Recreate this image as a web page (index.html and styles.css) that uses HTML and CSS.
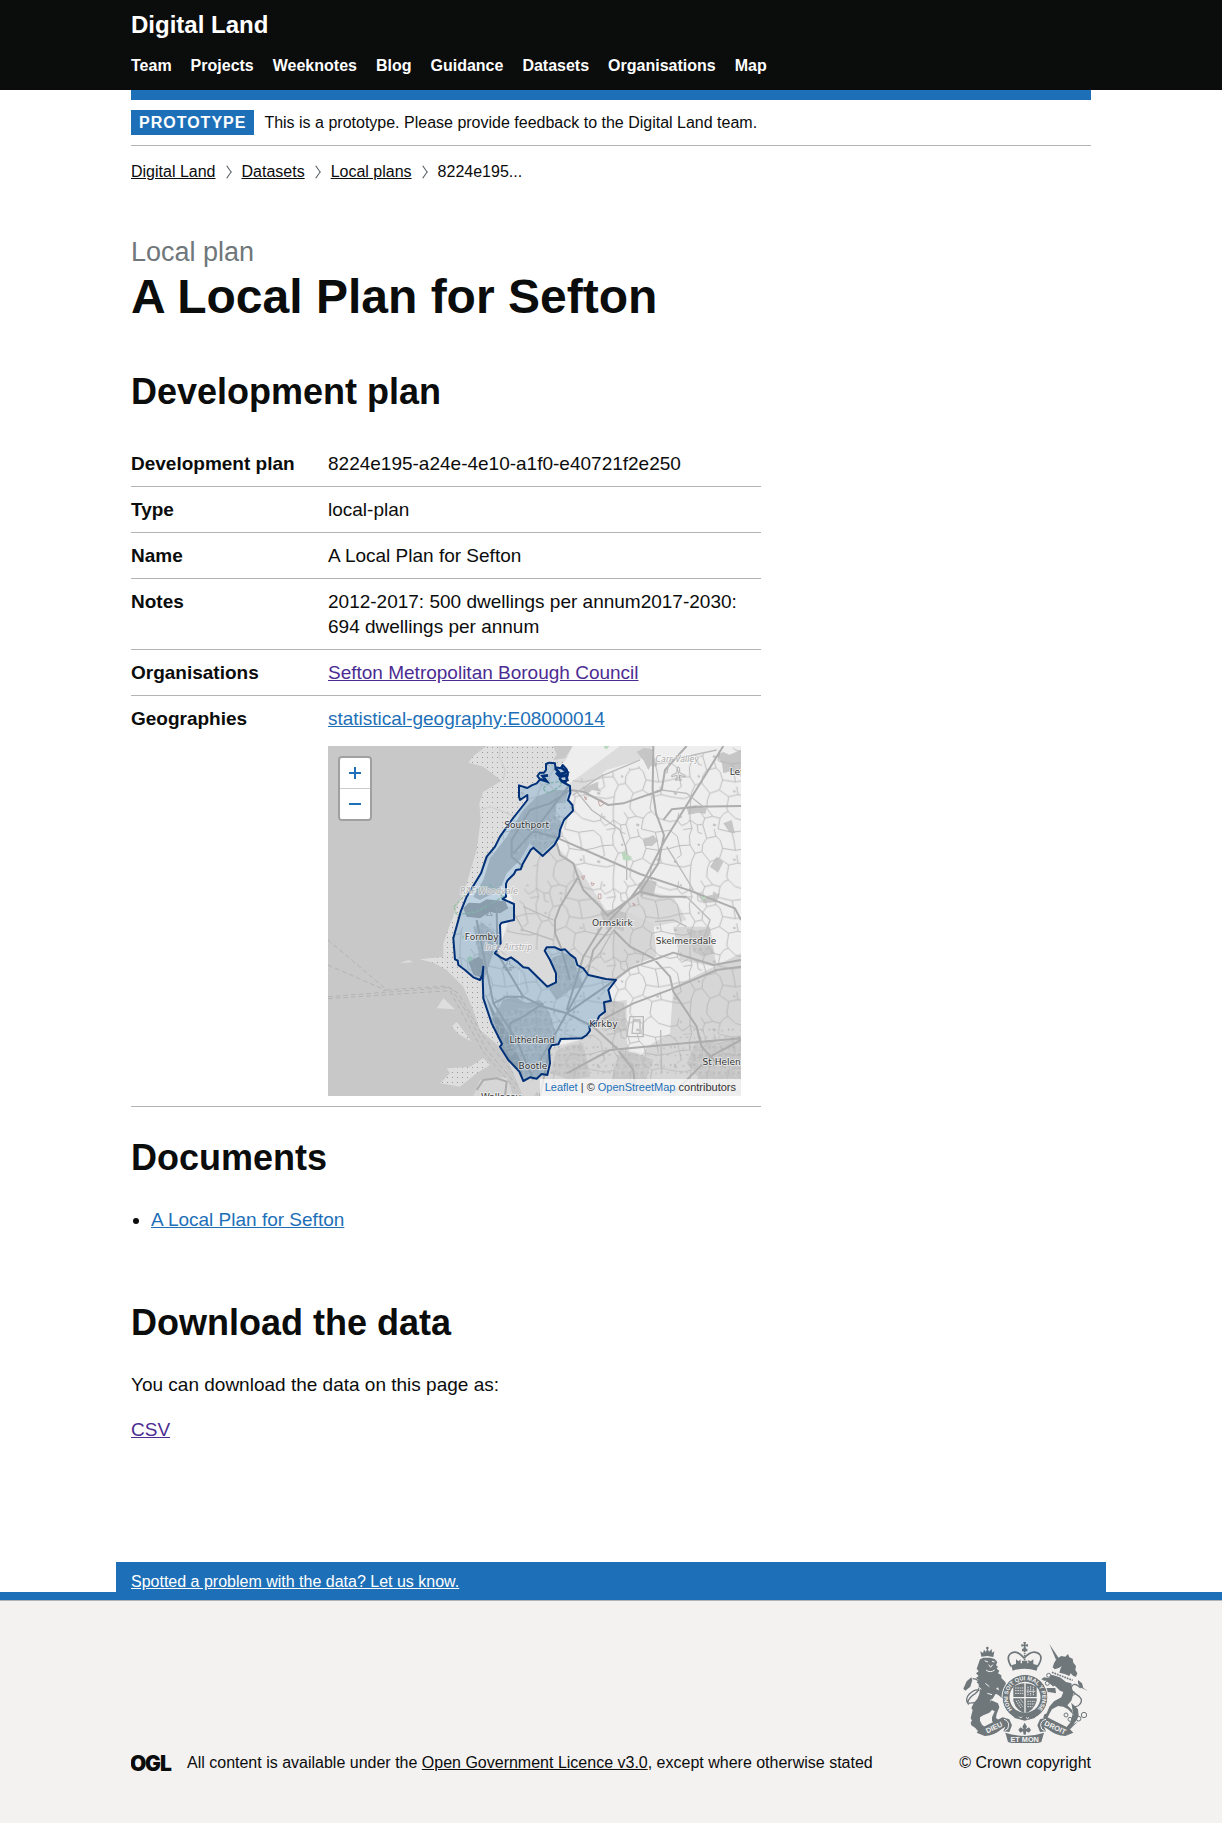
FILE: index.html
```html
<!DOCTYPE html>
<html lang="en">
<head>
<meta charset="utf-8">
<meta name="viewport" content="width=device-width, initial-scale=1">
<title>A Local Plan for Sefton | Digital Land</title>
<link rel="stylesheet" href="styles.css">
</head>
<body>
<header class="header">
  <div class="container">
    <a class="header-title" href="#">Digital Land</a>
    <nav class="header-nav" aria-label="Main">
      <a href="#">Team</a>
      <a href="#">Projects</a>
      <a href="#">Weeknotes</a>
      <a href="#">Blog</a>
      <a href="#">Guidance</a>
      <a href="#">Datasets</a>
      <a href="#">Organisations</a>
      <a href="#">Map</a>
    </nav>
  </div>
</header>

<div class="container">
  <div class="phase-banner">
    <strong class="tag">prototype</strong>
    <span>This is a prototype. Please provide feedback to the Digital Land team.</span>
  </div>
  <nav aria-label="Breadcrumb">
    <ol class="breadcrumbs">
      <li><a href="#">Digital Land</a></li>
      <li><a href="#">Datasets</a></li>
      <li><a href="#">Local plans</a></li>
      <li>8224e195...</li>
    </ol>
  </nav>

  <main class="main">
    <span class="caption">Local plan</span>
    <h1 class="title">A Local Plan for Sefton</h1>

    <section class="section">
      <h2 class="heading">Development plan</h2>
      <dl class="summary">
        <div class="summary-row"><dt>Development plan</dt><dd>8224e195-a24e-4e10-a1f0-e40721f2e250</dd></div>
        <div class="summary-row"><dt>Type</dt><dd>local-plan</dd></div>
        <div class="summary-row"><dt>Name</dt><dd>A Local Plan for Sefton</dd></div>
        <div class="summary-row"><dt>Notes</dt><dd>2012-2017: 500 dwellings per annum2017-2030: 694 dwellings per annum</dd></div>
        <div class="summary-row"><dt>Organisations</dt><dd><a class="link visited" href="#">Sefton Metropolitan Borough Council</a></dd></div>
        <div class="summary-row"><dt>Geographies</dt><dd>
          <a class="link" href="#">statistical-geography:E08000014</a>
          <div class="map">
            <svg class="map-canvas" viewBox="-336 18 1239 1050" preserveAspectRatio="xMidYMid slice" role="img" aria-label="Map of Sefton">
              <defs>
                <pattern id="flats" width="15" height="15" patternUnits="userSpaceOnUse"><rect x="6" y="6" width="3" height="3" fill="#999"/></pattern>
                <pattern id="lanes" width="230" height="205" patternUnits="userSpaceOnUse">
                  <path d="M0 40L22 36 35 52 52 44 60 35 82 50 98 48 104 30 128 24 150 30 163 14 175 10 196 30 230 40M60 35L66 60 58 82 60 110 75 135 64 160 60 205M98 48L110 90 138 84 150 95 158 120 196 126 230 120M0 120L28 112 60 110M110 90L98 108 96 130 120 160 112 180 110 205M158 120L148 150 176 170 170 205M150 30L144 62 186 72 230 66M60 0V35M110 0L128 24M170 0L175 10M75 135L96 130M0 66L22 84 28 112M186 72L192 98 196 126M120 160L148 150M66 60L40 64M138 84L132 62M28 112L34 140 20 150M0 170L40 176 62 170M176 170L204 164 230 170M204 164L200 140M104 30L92 12M82 50L84 72 96 76M22 36L26 14" fill="none" stroke="#b4b4b4" stroke-width="2.6" stroke-linejoin="round"/>
                  <path d="M130 45l9 3-3 6-8-2zM30 22l7 3-3 5-6-3zM85 105l6 4-4 5-5-5zM12 155l10 3-3 7-8-3zM190 150l7 2-1 6-7-2z" fill="#bebebe"/>
                </pattern>
                <pattern id="streets" width="58" height="53" patternUnits="userSpaceOnUse">
                  <path d="M0 10L24 16 58 6M24 16L16 53M40 12L50 32 32 53M0 34L19 38 50 32 58 34M16 0L24 16M24 27l20-6M6 12l-3 20M34 36l4 8" fill="none" stroke="#d8d8d8" stroke-width="2"/>
                  <path d="M6 18h5v5H6zM31 22h6v4h-6zM42 42h6v4h-6zM8 44h4v4H8zM52 18h4v6h-4zM24 42h4v5h-4z" fill="#adadad"/>
                </pattern>
                <path id="sefton" d="M237 136L262 144 275 136 290 130 300 118 292 108 300 98 312 98 318 90 318 72 328 68 345 70 346 82 362 85 368 75 380 88 384 102 378 125 368 126 390 138 391 158 384 180 397 195 399 212 372 240 360 270 358 288 343 315 308 348 280 323 272 330 248 372 242 388 228 390 222 402 202 422 198 432 198 470 188 477 222 492 222 540 185 548 180 555 182 610 165 640 182 652 198 660 213 652 235 668 250 682 265 684 322 740 348 727 348 700 330 660 314 632 320 622 345 622 362 630 375 628 390 643 406 655 412 675 430 685 445 705 475 712 498 717 528 720 505 750 513 782 492 787 495 815 478 828 468 848 448 860 450 872 440 885 425 895 362 897 355 913 335 916 327 930 330 970 322 1005 305 1002 290 1016 270 1012 250 1023 238 995 205 960 180 920 186 912 155 850 130 775 128 712 130 680 127 705 120 720 100 712 75 690 55 675 53 662 45 658 40 595 62 515 80 470 123 400 140 350 165 320 180 290 215 240 262 180 262 165 240 180 237 170Z"/>
                <clipPath id="inside"><use href="#sefton"/></clipPath>
              </defs>
              <rect x="-336" y="18" width="1239" height="1050" fill="#c8c8c8"/>
              <g id="flat-shapes">
                <path d="M140 18L100 48 85 68 130 80 185 122 130 155 118 190 122 240 110 330 80 430 35 540 10 610 10 650-60 658-20 668 20 690 70 740 100 810 120 870 180 920 400 700 400 18ZM-120 670L-95 660-80 666ZM-10 805L10 775 45 808ZM35 860L50 845 95 905 60 885ZM0 1030L30 1000 20 985 90 980 130 955 150 975 110 1000 60 1040Z" fill="#dedede"/>
                <path d="M140 18L100 48 85 68 130 80 185 122 130 155 118 190 122 240 110 330 80 430 35 540 10 610 10 650-60 658-20 668 20 690 70 740 100 810 120 870 180 920 400 700 400 18ZM35 860L50 845 95 905 60 885ZM0 1030L30 1000 20 985 90 980 130 955 150 975 110 1000 60 1040Z" fill="url(#flats)"/>
                <path d="M180 18L178 50 195 90 190 120M120 210L150 200 190 215 225 230" fill="none" stroke="#d0d0d0" stroke-width="4"/>
              </g>
              <path d="M340 18L398 18 375 55 340 60 350 45Z" fill="#c8c8c8"/>
              <path d="M398 18H903V1068H250L205 960 130 775 128 700 53 662 40 595 80 470 240 200 300 110 340 95 378 60Z" fill="#eee"/>
              <path d="M540 18L390 130 400 165 500 90 600 60 640 18Z" fill="#dcdcdc"/>
              <path d="M340 310L420 390 505 520 600 450 700 470 740 540 640 560 610 660 520 730 420 700 320 740 170 650 222 490 198 430 280 323Z" fill="#dadada"/>
              <path d="M505 540L560 515 640 550 650 650 560 680 520 660ZM700 560L810 560 830 680 720 660ZM700 740L903 640V1068H540L620 920 690 880ZM470 790L560 780 560 900 600 1068H250L205 960 330 925 420 900Z" fill="#d6d6d6"/>
              <path d="M100 1068L120 1020 200 1010 220 1068Z" fill="#d6d6d6"/>
              <g fill="#c6c6c6">
                <path d="M590 35L612 24 640 28 636 46 652 60 650 80 632 78 625 90 612 64ZM830 45L850 36 868 44 903 30V110L876 92 850 100 846 72ZM430 145L448 136 475 125 474 140 484 155 456 150 440 165ZM610 295L626 292 640 285 654 302 636 318 615 318ZM740 200L766 196 800 205 796 222 775 218 745 224ZM850 250L875 240 885 280 868 276ZM810 380L830 350 850 366 834 398ZM595 430L620 420 650 425 640 470 614 464 600 470ZM770 460L800 468 840 460 830 486 790 490ZM480 515L520 508 560 520 550 575 520 560 500 570ZM740 565L770 572 810 565 806 600 824 640 790 650 760 636ZM485 795L520 782 552 790 560 870 530 880 500 860ZM540 930L590 940 640 960 620 1010 640 1068 500 1068 520 1000ZM770 900L830 910 903 890V1068H760L774 1010 740 970ZM350 930L390 916 430 910 450 1010 390 1020 330 1000Z"/>
              </g>
              <path d="M398 120L540 90 903 18V560L700 600 640 560 505 520 300 330ZM170 650L300 330 640 560 903 500V1068H280L450 870 520 720 345 620Z" fill="url(#lanes)"/>
              <path d="M540 920L640 950 700 880 903 840V1068H300L330 920 450 890ZM740 565L810 575 820 650 750 640ZM485 795L550 790 560 870 500 860Z" fill="url(#streets)" opacity=".7"/>
              <g clip-path="url(#inside)">
                <path d="M237 136V1068H560V18H237ZM40 500H240V1068H40Z" fill="#e2e2e2"/>
                <path d="M150 355L200 290 250 210 290 170 340 150 385 150 376 190 350 190 346 230 370 250 350 300 300 345 270 310 240 360 200 400 180 450 120 480 100 470 130 420ZM100 560L130 550 165 580 160 640 132 720 110 690 116 640ZM130 850L160 830 190 780 225 770 260 790 300 780 330 820 350 890 330 1020 250 1020 180 920ZM310 690L340 650 375 640 400 650 410 690 430 740 390 750 350 780 330 750Z" fill="#c2c2c2"/>
                <path d="M70 505L86 488 120 490 140 478 196 484 205 505 180 520 150 515 120 535 80 530ZM85 665L115 650 130 660V715L100 704ZM135 760L165 820 200 870 240 960 250 1010 200 960Z" fill="#a9a9a9"/>
                <path d="M40 300H400V18H40ZM40 560H530V1068H40Z" fill="url(#lanes)" opacity=".8"/>
                <path d="M200 380L400 140V300L300 345 250 300ZM105 540H160V620H105ZM140 830L330 780 430 820 340 1020H250ZM340 650L420 690 400 760 330 740Z" fill="url(#streets)" opacity=".8"/>
              </g>
              <g fill="none" stroke="#adadad" stroke-width="6" stroke-linejoin="round">
                <path d="M850 18L675 300 615 415 575 470 505 545M225 252L270 270 355 295 600 402 750 452 885 505 903 540M390 150L430 155 505 195 550 190 665 150 675 90 740 18M640 18L638 150 648 220 672 285 655 370 600 455 505 525M350 310L360 345 400 370 410 400 430 450 480 500 505 530M415 410L360 500 345 540 345 580 362 620 390 720M670 240L695 208 770 200 903 198M515 560L460 630 440 710 380 820 330 910 300 960M485 560L430 650 380 810M520 570L570 620 640 655 690 710 700 755 770 860 785 920 830 970M380 820L510 730 570 685 640 660 700 638 820 675 903 660M485 840L580 790 700 745 830 690 903 680M170 500L172 640 250 770 310 800 380 820 460 860 530 925 580 990 585 1040M380 1000L510 930 640 918 903 895M903 900L810 950 700 1060M110 540L130 640 160 790 230 900 280 1020M310 790L250 830 210 850 215 920M390 150L330 190 270 210 215 300 215 350 250 380M385 140L300 250 220 340M330 925L300 1068M600 455L660 470 740 470M160 790L200 770 250 770"/>
              </g>
              <g fill="none" stroke="#bbb" stroke-width="4">
                <path d="M410 155L455 210 540 270 560 330 560 420M400 165L480 110 600 60M680 100L690 60 830 30M665 150L740 160 790 200M680 320L730 400 760 450M740 470L810 540 790 600M645 545L700 540 740 560M662 870L665 1000M570 830h40v60h-50zM580 840h20v40h-24zM340 600L250 570 222 520M250 500L340 540M420 700L480 640 520 570"/>
              </g>
              <g fill="none" stroke="#a9a9a9" stroke-width="2" stroke-dasharray="14 9">
                <path d="M-336 600L-165 745-170 755M-336 675L-160 752M-336 770L30 742 70 800 140 930 235 1040M-336 776L30 752 62 812 130 936 225 1046M-160 750L20 738 55 760 130 890 220 1000"/>
              </g>
              <path d="M110 1050L130 1020 170 1015 200 1025 195 1068" fill="none" stroke="#adadad" stroke-width="6"/>
              <g fill="none" stroke="#9fc3a6" stroke-width="4" stroke-dasharray="10 4">
                <path d="M310 145L325 130 360 124 365 135 330 158 316 155ZM42 500L80 460 150 435 190 470 110 515 50 525Z"/>
              </g>
              <path d="M545 340L555 332 560 345 575 350 570 362 550 360ZM785 470h12v8h-12zM492 18h16l-6 8h-8zM80 655l12-8 8 10-14 10zM65 590l6-4v12z" fill="#b9d8bd"/>
              <g fill="none" stroke="#c09a9a" stroke-width="2.5"><path d="M475 185l8-6 9 12-12 8zM424 410l10-3-4 12zM453 428l10 3-6 7zM475 462h8v14h-8zM432 170l8 3-2 7zM578 490l6 2-1 6z"/></g>
              <g fill="none" stroke="#a6a6a6" stroke-width="2.5">
                <path d="M711 86l4-6 4 6v12l16 8v4l-16-4v10l6 4h-20l6-4v-10l-16 4v-4l16-8zM144 496l4-6 4 6v10l14 8v4l-14-4v8l6 4h-20l6-4v-8l-14 4v-4l14-8zM201 666l4-6 4 6v8l12 6v4l-12-2v4l6 4h-20l6-4v-4l-12 2v-4l12-6z"/>
              </g>
              <use href="#sefton" fill="#1d70b8" fill-opacity=".22" stroke="#003078" stroke-width="6" stroke-linejoin="round"/>
              <path d="M300 118l20 6-12-16 16-2M345 84l16 18 20-6-18-14M348 98l12 12 18-4 4 14-16 4-8-10" fill="none" stroke="#003078" stroke-width="8"/>
              <g class="map-labels">
                <text x="260" y="263">Southport</text>
                <text x="125" y="599">Formby</text>
                <text x="517" y="558">Ormskirk</text>
                <text x="738" y="613">Skelmersdale</text>
                <text x="490" y="861">Kirkby</text>
                <text x="277" y="908">Litherland</text>
                <text x="279" y="986">Bootle</text>
                <text x="852" y="976">St Helens</text>
                <text x="922" y="106">Leyland</text>
                <text x="183" y="1079">Wallasey</text>
                <g class="map-minor">
                  <text x="147" y="462">RAF Woodvale</text>
                  <text x="205" y="630">Ince Airstrip</text>
                  <text x="712" y="66">Carr Valley</text>
                </g>
              </g>
            </svg>
            <div class="map-zoom">
              <button type="button" aria-label="Zoom in"><svg viewBox="0 0 14 14"><path d="M7 1v12M1 7h12"/></svg></button>
              <button type="button" aria-label="Zoom out"><svg viewBox="0 0 14 14"><path d="M1 7h12"/></svg></button>
            </div>
            <div class="map-credit"><a href="#">Leaflet</a> | © <a href="#">OpenStreetMap</a> contributors</div>
          </div>
        </dd></div>
      </dl>
    </section>

    <section class="section-documents">
      <h2 class="heading">Documents</h2>
      <ul class="list"><li><a class="link" href="#">A Local Plan for Sefton</a></li></ul>
    </section>

    <section class="section">
      <h2 class="heading">Download the data</h2>
      <p class="body">You can download the data on this page as:</p>
      <p class="body"><a class="link visited" href="#">CSV</a></p>
    </section>
  </main>
</div>

<div class="feedback">
  <div class="feedback-inner"><a href="#">Spotted a problem with the data? Let us know.</a></div>
</div>
<footer class="footer">
  <div class="container footer-inner">
    <div class="licence">
      <svg class="ogl" viewBox="0 0 41 17" role="img" aria-label="Open Government Licence"><text x="-1 14 29" y="16">OGL</text></svg>
      <span>All content is available under the <a href="#">Open Government Licence v3.0</a>, except where otherwise stated</span>
    </div>
    <a class="crown" href="#">
      <svg class="crest" viewBox="67 33 375 306" aria-hidden="true">
        <g fill="#6f777b">
          <path d="M122 80l-3-16 8 5 3-10 6 7 4-12 5 11 8-8 1 11 7-4-3 17-18-3z"/>
          <circle cx="140" cy="54" r="4"/>
          <path d="M118 88l10-5 20 0 14 4 8 9-4 10 6 4-4 6 8 6-4 8 10 6 0 8 12 12 4 14-4 6 6 8-6 6 2 10-8-2-2-8-10-6-4-12-6 4 0 14-10 16-8 4 4 12 2 18-8 8-18 8-10 6 0 10 6 12 8 6-2 6 10 0 8 6 0 5-22 3-12-4-10-12-12-8-2-8 4-6-4-8 6-24-4-6 8-16 10-12 6-14 2-14-2-16-8-4 6-8-8-6 8-6-8-8 8-6-6-8z"/>
          <path d="M166 152l22 6 8 10-4 8-22-10zM166 176l22 12 10 18-2 8-10-8-14-12-12-4zM150 210l22 10 4 12-8 20-2 12 8 6 12 2 0 8-20 2-12-8 0-12 8-18-14-8z"/>
          <path d="M68 176l10-22 14-12 3 8-6 20-15 12zM428 174l-4-14-12-10 0 10 6 12 26 12z"/>
          <path d="M326 42l28 42-8 5z"/>
          <path d="M340 100l8-14 14-8 12 2 8-8 4 10 10 4 2 12 8 10-2 12 6 10-4 10-8-2-8-8-4 8-14-6-16-4 4-14 4-6-10 6-12 4-6-6z"/>
          <path d="M338 136l20 6 18 14 16 4 2 14 4 18-6 20-12 14 14 14 6 20-6 16 8 6-14 6 4-22 4-14-14-14-14-8-16-2-18 10-8 14-6 12-12 0 2-10 8-4 8-20 14-16 22-12 6-16-10-4-12-12-16-10-6-12 6-14z"/>
          <path d="M346 156l-22-12-14-2-8 6 8 4 8 0 20 18zM344 174l-26 0-10 10 2 12 10 6-2-12 6-4 22 4z"/>
          <path d="M392 218l20 20 2 20-6 12-18 24-18 4 18-22 8-20z"/>
        </g>
        <path d="M120 224l-20-6-18 2q-10-14 4-28 20-18 30-10M96 146q22 0 20 24-2 16-20 26-20 18-12 28M420 174q-18-18-26-6-8 14 14 26 22 12 10 28-8 12-20 6" fill="none" stroke="#6f777b" stroke-width="4"/>
        <path d="M332 130l62 24M336 122l58 24" stroke="#f3f2f1" stroke-width="2"/>
        <path d="M334 127l62 24" stroke="#6f777b" stroke-width="5" stroke-dasharray="5 3"/>
        <path d="M132 92l10 4M154 94l8 2M144 104l6 8 6-8M136 120q12 10 26 0M112 170l10 8M134 160l12 10M140 190l14 4" stroke="#f3f2f1" stroke-width="3" fill="none"/>
        <g fill="none" stroke="#6f777b" stroke-width="3">
          <circle cx="324" cy="136" r="6"/><circle cx="320" cy="160" r="6"/><circle cx="398" cy="190" r="5"/><circle cx="376" cy="255" r="6"/><circle cx="388" cy="268" r="6"/><circle cx="414" cy="266" r="7"/><circle cx="430" cy="255" r="8"/><circle cx="404" cy="250" r="5"/>
          <path d="M212 110Q196 84 208 72 226 56 250 84 276 56 296 72 308 84 290 110" stroke-width="5"/>
          <path d="M252 62V108" stroke-width="5" stroke-dasharray="4 2"/>
        </g>
        <g fill="#6f777b">
          <path d="M248 36h8l-2 8 8-2v8l-8-2 2 8h-8l2-8-8 2v-8l8 2zM244 56h16v8h-16zM212 106q40-14 80 0l-4 16q-36-12-72 0zM226 88l8 6 6-6v14h-14zM262 90l8 4 8-6v14h-14zM244 92h16v12h-16z"/>
        </g>
        <circle cx="253" cy="202" r="57" fill="none" stroke="#6f777b" stroke-width="21"/>
        <circle cx="253" cy="202" r="69" fill="none" stroke="#f3f2f1" stroke-width="3"/>
        <path id="garter" d="M215 238A52 52 0 1 1 291 238" fill="none"/>
        <text class="motto garter-text"><textPath href="#garter">HONI SOIT QUI MAL Y PENSE</textPath></text>
        <path d="M218 170Q252 150 288 170V212Q280 242 253 250 226 242 218 212Z" fill="#6f777b"/>
        <path d="M253 158V248M216 203H290" stroke="#f3f2f1" stroke-width="4"/>
        <path d="M223 174h25M223 182h25M223 190h25M260 214h24M260 222h22M260 230h16M232 210l14 20M226 212l14 22M240 208l8 12M262 170v28M270 168v30M278 170v28M258 184h28" stroke="#f3f2f1" stroke-width="2.5" stroke-dasharray="5 2"/>
        <path d="M210 246l14-6 28 14 28-14 14 6-12 18-30 8-30-8z" fill="#6f777b"/>
        <path d="M236 260l4 4 4-4M256 262l5 4 4-4" stroke="#f3f2f1" stroke-width="3" fill="none"/>
        <g fill="#6f777b">
          <path d="M90 272L122 294 186 262 206 268 214 286 206 306 188 304 194 290 182 298Q160 318 132 318L108 308 116 298ZM414 272L384 294 320 262 298 268 290 286 298 306 316 304 310 290 322 298Q346 318 374 318L398 308 388 298ZM194 308Q252 328 310 308L302 336Q252 352 202 336Z"/>
          <path d="M252 278l7 12-4 8 10-6 6 8-6 8-8-4-2 10h-6l-2-10-8 4-6-8 6-8 10 6-4-8z"/>
        </g>
        <path d="M190 268q14 4 14 18t-12 16M316 268q-16 4-16 18t12 16" fill="none" stroke="#f3f2f1" stroke-width="3"/>
        <g class="motto">
          <text x="160" y="300" transform="rotate(-25 160 292)">DIEU</text>
          <text x="252" y="337">ET MON</text>
          <text x="344" y="300" transform="rotate(25 344 292)">DROIT</text>
        </g>
      </svg>
      <span>© Crown copyright</span>
    </a>
  </div>
</footer>
</body>
</html>
```
FILE: styles.css
```css
* { box-sizing: border-box; }

body {
  margin: 0;
  background: #fff;
  color: #0b0c0c;
  font: 16px/20px "Liberation Sans", Arial, sans-serif;
}

a { color: inherit; }

.container {
  max-width: 990px;
  margin: 0 auto;
  padding: 0 15px;
}

.header { background: #0b0c0c; color: #fff; padding: 10px 0 14px; }
.header a { color: #fff; font-weight: bold; text-decoration: none; }
.header-title { display: block; font-size: 24px; line-height: 30px; }
.header-nav { display: flex; flex-wrap: wrap; gap: 0 19px; margin-top: 16px; }

.phase-banner {
  display: flex;
  align-items: center;
  gap: 10px;
  padding: 10px 0;
  border-top: 10px solid #1d70b8;
  border-bottom: 1px solid #b1b4b6;
}
.tag {
  background: #1d70b8;
  color: #fff;
  padding: 3px 8px 2px;
  letter-spacing: 1px;
  text-transform: uppercase;
}

.breadcrumbs {
  display: flex;
  flex-wrap: wrap;
  list-style: none;
  margin: 16px 0 0;
  padding: 0;
}
.breadcrumbs li { display: flex; align-items: center; }
.breadcrumbs li + li::before {
  content: "";
  width: 7px;
  height: 7px;
  margin: 0 11px 0 7px;
  border: solid #505a5f;
  border-width: 1px 1px 0 0;
  transform: rotate(45deg) skew(10deg, 10deg);
}

.main { padding: 55px 0 120px; }
.caption { display: block; margin-bottom: 5px; color: #6f777b; font-size: 27px; line-height: 30px; }
.title { margin: 0 0 50px; font-size: 48px; line-height: 50px; }
.heading { margin: 0 0 29px; font-size: 36px; line-height: 40px; }
.section, .section-documents { max-width: 630px; font-size: 19px; line-height: 25px; }
.section-documents { margin: 31px 0 71px; }

.summary { margin: 0; }
.summary-row {
  display: grid;
  grid-template-columns: 197px minmax(0, 1fr);
  padding: 10px 0;
  border-bottom: 1px solid #b1b4b6;
}
.summary-row dt { font-weight: bold; }
.summary-row dd { margin: 0; padding-right: 20px; }
.link { color: #1d70b8; }
.visited { color: #4c2c92; }
.list { margin: 0; padding-left: 20px; }
.body { margin: 0; }
.body + .body { margin-top: 20px; }

.map { position: relative; margin-top: 15px; height: 350px; overflow: hidden; }
.map-canvas { display: block; width: 100%; height: 100%; }
.map-labels {
  font: 27px "DejaVu Sans", sans-serif;
  fill: #333;
  stroke: #fff;
  stroke-opacity: 0.6;
  stroke-width: 5px;
  paint-order: stroke;
  text-anchor: middle;
}
.map-minor { font-size: 24px; font-style: italic; fill: #aaa; }
.map-zoom {
  position: absolute;
  top: 10px;
  left: 10px;
  border: 2px solid #a0a0a0;
  border-radius: 4px;
  overflow: hidden;
}
.map-zoom button {
  display: grid;
  place-items: center;
  width: 30px;
  height: 30px;
  padding: 0;
  border: 0;
  background: #fff;
}
.map-zoom button + button { height: 31px; border-top: 1px solid #ccc; }
.map-zoom svg { width: 14px; height: 14px; fill: none; stroke: #1d70b8; stroke-width: 2; }
.map-credit {
  position: absolute;
  right: 0;
  bottom: 0;
  padding: 0 5px;
  background: rgba(255, 255, 255, 0.7);
  color: #333;
  font-size: 11px;
  line-height: 17px;
}
.map-credit a { color: #1d70b8; text-decoration: none; }

.feedback { border-bottom: 8px solid #1d70b8; }
.feedback-inner {
  max-width: 990px;
  margin: 0 auto;
  padding: 10px 15px 0;
  background: #1d70b8;
  color: #fff;
}

.footer { padding: 40px 0 50px; border-top: 1px solid #b1b4b6; background: #f3f2f1; }
.footer-inner { display: flex; justify-content: space-between; align-items: flex-end; gap: 20px; }
.licence { display: flex; align-items: center; gap: 15px; }
.ogl { width: 41px; height: 17px; font: 900 21px Inter, sans-serif; fill: #0b0c0c; }
.crown { display: flex; flex-direction: column; align-items: center; gap: 10px; text-decoration: none; }
.crest { width: 125px; height: 102px; }
.motto { fill: #f3f2f1; font: bold 22px "Liberation Sans", sans-serif; text-anchor: middle; }
.garter-text { font-size: 17px; text-anchor: start; }
```
